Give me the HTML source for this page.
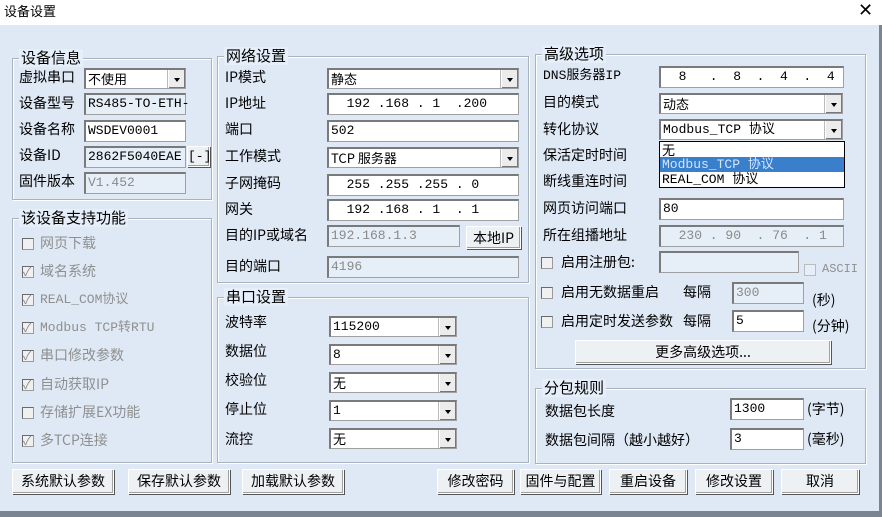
<!DOCTYPE html><html><head><meta charset="utf-8"><style>
*{box-sizing:border-box;margin:0;padding:0}
body{width:882px;height:517px;overflow:hidden;background:#dfe9f5;font-family:"Liberation Sans","Noto Sans CJK SC",sans-serif;font-size:14px;color:#000;position:relative}
.a{position:absolute}
.t{position:absolute;white-space:nowrap;line-height:16px;font-family:"Liberation Mono","Noto Sans CJK SC",monospace;font-size:13px}
.g{position:absolute;border:1px solid #a9b3bf;box-shadow:1px 1px 0 #fff inset,1px 1px 0 #fff}
.gt{position:absolute;top:-10px;left:6px;background:#e6eff9;padding:0 2px;font-size:15px;line-height:18px;font-family:"Noto Sans CJK SC",sans-serif}
.in{position:absolute;background:#fff;border:1px solid #a0a0a0;border-top:2px solid #7a7a7a;border-left:2px solid #7a7a7a;font-family:"Liberation Mono",monospace;font-size:13px;line-height:17px;padding-left:2px;white-space:pre}
.dis{background:#e6eef7;color:#8a8a8a}
.dd{position:absolute;right:0;top:0;bottom:0;width:17px;background:#ececec;border-left:1px solid #fff;box-shadow:-1px 0 0 #bbb, inset -1px -1px 0 #777}
.dd:after{content:"";position:absolute;left:5px;top:8px;border:3px solid transparent;border-top:4px solid #000}
.b{position:absolute;background:#eef1f4;border:1px solid #fff;box-shadow:1px 1px 0 #555,inset -1px -1px 0 #a0a0a0;text-align:center;font-family:"Noto Sans CJK SC",sans-serif;font-size:14px;line-height:22px}
.cb{position:absolute;width:12px;height:12px;background:#f0f0f0;border:1px solid #9a9a9a;border-top-color:#6a6a6a;border-left-color:#6a6a6a}
.cb.k:after{content:"✓";position:absolute;left:0;top:-4px;font-size:12px;color:#888}
.gr{color:#8f8f8f}
.sans{font-family:"Noto Sans CJK SC",sans-serif;font-size:14px}
</style></head><body>
<div class="a" style="left:0;top:0;width:882px;height:25px;background:#fff"></div>
<div class="t sans" style="left:4px;top:3px;font-size:13px">设备设置</div>
<div class="t" style="left:858px;top:2px;font-size:18px;font-family:'Liberation Sans'">✕</div>
<div class="a" style="left:0;top:511px;width:882px;height:6px;background:#7a8591"></div>
<div class="a" style="left:879px;top:25px;width:3px;height:492px;background:#7a8591"></div>

<div class="g" style="left:12px;top:58px;width:200px;height:142px"><div class="gt">设备信息</div></div>
<div class="t sans" style="left:19px;top:69px">虚拟串口</div>
<div class="in" style="left:84px;top:68px;width:102px;height:21px;font-family:'Noto Sans CJK SC'">不使用<div class="dd"></div></div>
<div class="t sans" style="left:19px;top:95px">设备型号</div>
<div class="in dis" style="left:84px;top:93px;width:102px;height:22px;color:#000">RS485-TO-ETH-</div>
<div class="t sans" style="left:19px;top:121px">设备名称</div>
<div class="in" style="left:84px;top:120px;width:102px;height:22px">WSDEV0001</div>
<div class="t sans" style="left:19px;top:147px">设备ID</div>
<div class="in dis" style="left:84px;top:146px;width:102px;height:22px;color:#000">2862F5040EAE</div>
<div class="b" style="left:187px;top:146px;width:23px;height:21px;font-family:'Liberation Mono';font-size:13px;line-height:19px">[-]</div>
<div class="t sans" style="left:19px;top:173px">固件版本</div>
<div class="in dis" style="left:84px;top:172px;width:102px;height:22px">V1.452</div>

<div class="g" style="left:12px;top:218px;width:200px;height:245px"><div class="gt">该设备支持功能</div></div>
<div class="cb" style="left:22px;top:238px"></div><div class="t sans gr" style="left:40px;top:235px">网页下载</div>
<div class="cb k" style="left:22px;top:266px"></div><div class="t sans gr" style="left:40px;top:263px">域名系统</div>
<div class="cb k" style="left:22px;top:294px"></div><div class="t gr" style="left:40px;top:292px">REAL_COM协议</div>
<div class="cb k" style="left:22px;top:322px"></div><div class="t gr" style="left:40px;top:320px">Modbus TCP转RTU</div>
<div class="cb k" style="left:22px;top:350px"></div><div class="t sans gr" style="left:40px;top:347px">串口修改参数</div>
<div class="cb k" style="left:22px;top:379px"></div><div class="t sans gr" style="left:40px;top:376px">自动获取IP</div>
<div class="cb" style="left:22px;top:407px"></div><div class="t sans gr" style="left:40px;top:404px">存储扩展EX功能</div>
<div class="cb k" style="left:22px;top:435px"></div><div class="t sans gr" style="left:40px;top:432px">多TCP连接</div>

<div class="g" style="left:217px;top:56px;width:312px;height:227px"><div class="gt">网络设置</div></div>
<div class="t sans" style="left:225px;top:69px">IP模式</div>
<div class="in" style="left:327px;top:68px;width:192px;height:21px;font-family:'Noto Sans CJK SC'">静态<div class="dd"></div></div>
<div class="t sans" style="left:225px;top:95px">IP地址</div>
<div class="in" style="left:327px;top:93px;width:192px;height:22px">  192 .168 . 1  .200</div>
<div class="t sans" style="left:225px;top:121px">端口</div>
<div class="in" style="left:327px;top:120px;width:192px;height:22px">502</div>
<div class="t sans" style="left:225px;top:148px">工作模式</div>
<div class="in" style="left:327px;top:147px;width:192px;height:21px;font-family:'Noto Sans CJK SC'">TCP 服务器<div class="dd"></div></div>
<div class="t sans" style="left:225px;top:175px">子网掩码</div>
<div class="in" style="left:327px;top:174px;width:192px;height:22px">  255 .255 .255 . 0</div>
<div class="t sans" style="left:225px;top:201px">网关</div>
<div class="in" style="left:327px;top:199px;width:192px;height:22px">  192 .168 . 1  . 1</div>
<div class="t sans" style="left:225px;top:227px">目的IP或域名</div>
<div class="in dis" style="left:327px;top:225px;width:133px;height:22px">192.168.1.3</div>
<div class="b" style="left:466px;top:226px;width:55px;height:23px">本地IP</div>
<div class="t sans" style="left:225px;top:258px">目的端口</div>
<div class="in dis" style="left:327px;top:256px;width:192px;height:22px">4196</div>

<div class="g" style="left:217px;top:297px;width:312px;height:166px"><div class="gt">串口设置</div></div>
<div class="t sans" style="left:225px;top:314px">波特率</div>
<div class="in" style="left:329px;top:316px;width:128px;height:21px">115200<div class="dd"></div></div>
<div class="t sans" style="left:225px;top:343px">数据位</div>
<div class="in" style="left:329px;top:344px;width:128px;height:21px">8<div class="dd"></div></div>
<div class="t sans" style="left:225px;top:372px">校验位</div>
<div class="in" style="left:329px;top:372px;width:128px;height:21px;font-family:'Noto Sans CJK SC'">无<div class="dd"></div></div>
<div class="t sans" style="left:225px;top:401px">停止位</div>
<div class="in" style="left:329px;top:400px;width:128px;height:21px">1<div class="dd"></div></div>
<div class="t sans" style="left:225px;top:431px">流控</div>
<div class="in" style="left:329px;top:428px;width:128px;height:21px;font-family:'Noto Sans CJK SC'">无<div class="dd"></div></div>

<div class="g" style="left:535px;top:54px;width:331px;height:315px"><div class="gt">高级选项</div></div>
<div class="t" style="left:543px;top:68px">DNS服务器IP</div>
<div class="in" style="left:659px;top:66px;width:185px;height:22px">  8   .  8  .  4  .  4</div>
<div class="t sans" style="left:543px;top:94px">目的模式</div>
<div class="in" style="left:659px;top:93px;width:184px;height:21px;font-family:'Noto Sans CJK SC'">动态<div class="dd"></div></div>
<div class="t sans" style="left:543px;top:121px">转化协议</div>
<div class="in" style="left:659px;top:119px;width:184px;height:21px">Modbus_TCP 协议<div class="dd"></div></div>
<div class="t sans" style="left:543px;top:147px">保活定时时间</div>
<div class="t sans" style="left:543px;top:173px">断线重连时间</div>
<div class="a" style="left:659px;top:141px;width:186px;height:47px;background:#fff;border:1px solid #000;font-family:'Liberation Mono',monospace;font-size:13px;line-height:15px">
<div style="padding-left:2px;font-family:'Noto Sans CJK SC'">无</div>
<div style="padding-left:2px;background:#3a7fcc;color:#cfe6ff">Modbus_TCP 协议</div>
<div style="padding-left:2px">REAL_COM 协议</div></div>
<div class="t sans" style="left:543px;top:200px">网页访问端口</div>
<div class="in" style="left:659px;top:198px;width:185px;height:22px">80</div>
<div class="t sans" style="left:543px;top:227px">所在组播地址</div>
<div class="in dis" style="left:659px;top:225px;width:185px;height:22px">  230 . 90  . 76  . 1</div>
<div class="cb" style="left:541px;top:257px"></div><div class="t sans" style="left:561px;top:254px">启用注册包:</div>
<div class="in dis" style="left:659px;top:251px;width:140px;height:22px"></div>
<div class="cb" style="left:804px;top:264px;background:#e6eef7;border-color:#bbb"></div><div class="t gr" style="left:822px;top:261px;font-size:12px">ASCII</div>
<div class="cb" style="left:541px;top:287px"></div><div class="t sans" style="left:561px;top:284px">启用无数据重启</div><div class="t sans" style="left:683px;top:284px">每隔</div>
<div class="in dis" style="left:732px;top:282px;width:72px;height:22px">300</div><div class="t sans" style="left:812px;top:292px">(秒)</div>
<div class="cb" style="left:541px;top:316px"></div><div class="t sans" style="left:561px;top:313px">启用定时发送参数</div><div class="t sans" style="left:683px;top:313px">每隔</div>
<div class="in" style="left:732px;top:310px;width:72px;height:22px">5</div><div class="t sans" style="left:812px;top:318px">(分钟)</div>
<div class="b" style="left:575px;top:340px;width:256px;height:24px">更多高级选项...</div>

<div class="g" style="left:535px;top:388px;width:331px;height:76px"><div class="gt">分包规则</div></div>
<div class="t sans" style="left:545px;top:403px">数据包长度</div>
<div class="in" style="left:730px;top:398px;width:74px;height:22px">1300</div><div class="t sans" style="left:807px;top:401px">(字节)</div>
<div class="t sans" style="left:545px;top:432px">数据包间隔（越小越好）</div>
<div class="in" style="left:730px;top:428px;width:74px;height:22px">3</div><div class="t sans" style="left:807px;top:431px">(毫秒)</div>

<div class="b" style="left:12px;top:469px;width:102px;height:25px">系统默认参数</div>
<div class="b" style="left:128px;top:469px;width:102px;height:25px">保存默认参数</div>
<div class="b" style="left:242px;top:469px;width:102px;height:25px">加载默认参数</div>
<div class="b" style="left:437px;top:469px;width:77px;height:25px">修改密码</div>
<div class="b" style="left:520px;top:469px;width:81px;height:25px">固件与配置</div>
<div class="b" style="left:609px;top:469px;width:78px;height:25px">重启设备</div>
<div class="b" style="left:695px;top:469px;width:78px;height:25px">修改设置</div>
<div class="b" style="left:781px;top:469px;width:78px;height:25px">取消</div>
</body></html>
